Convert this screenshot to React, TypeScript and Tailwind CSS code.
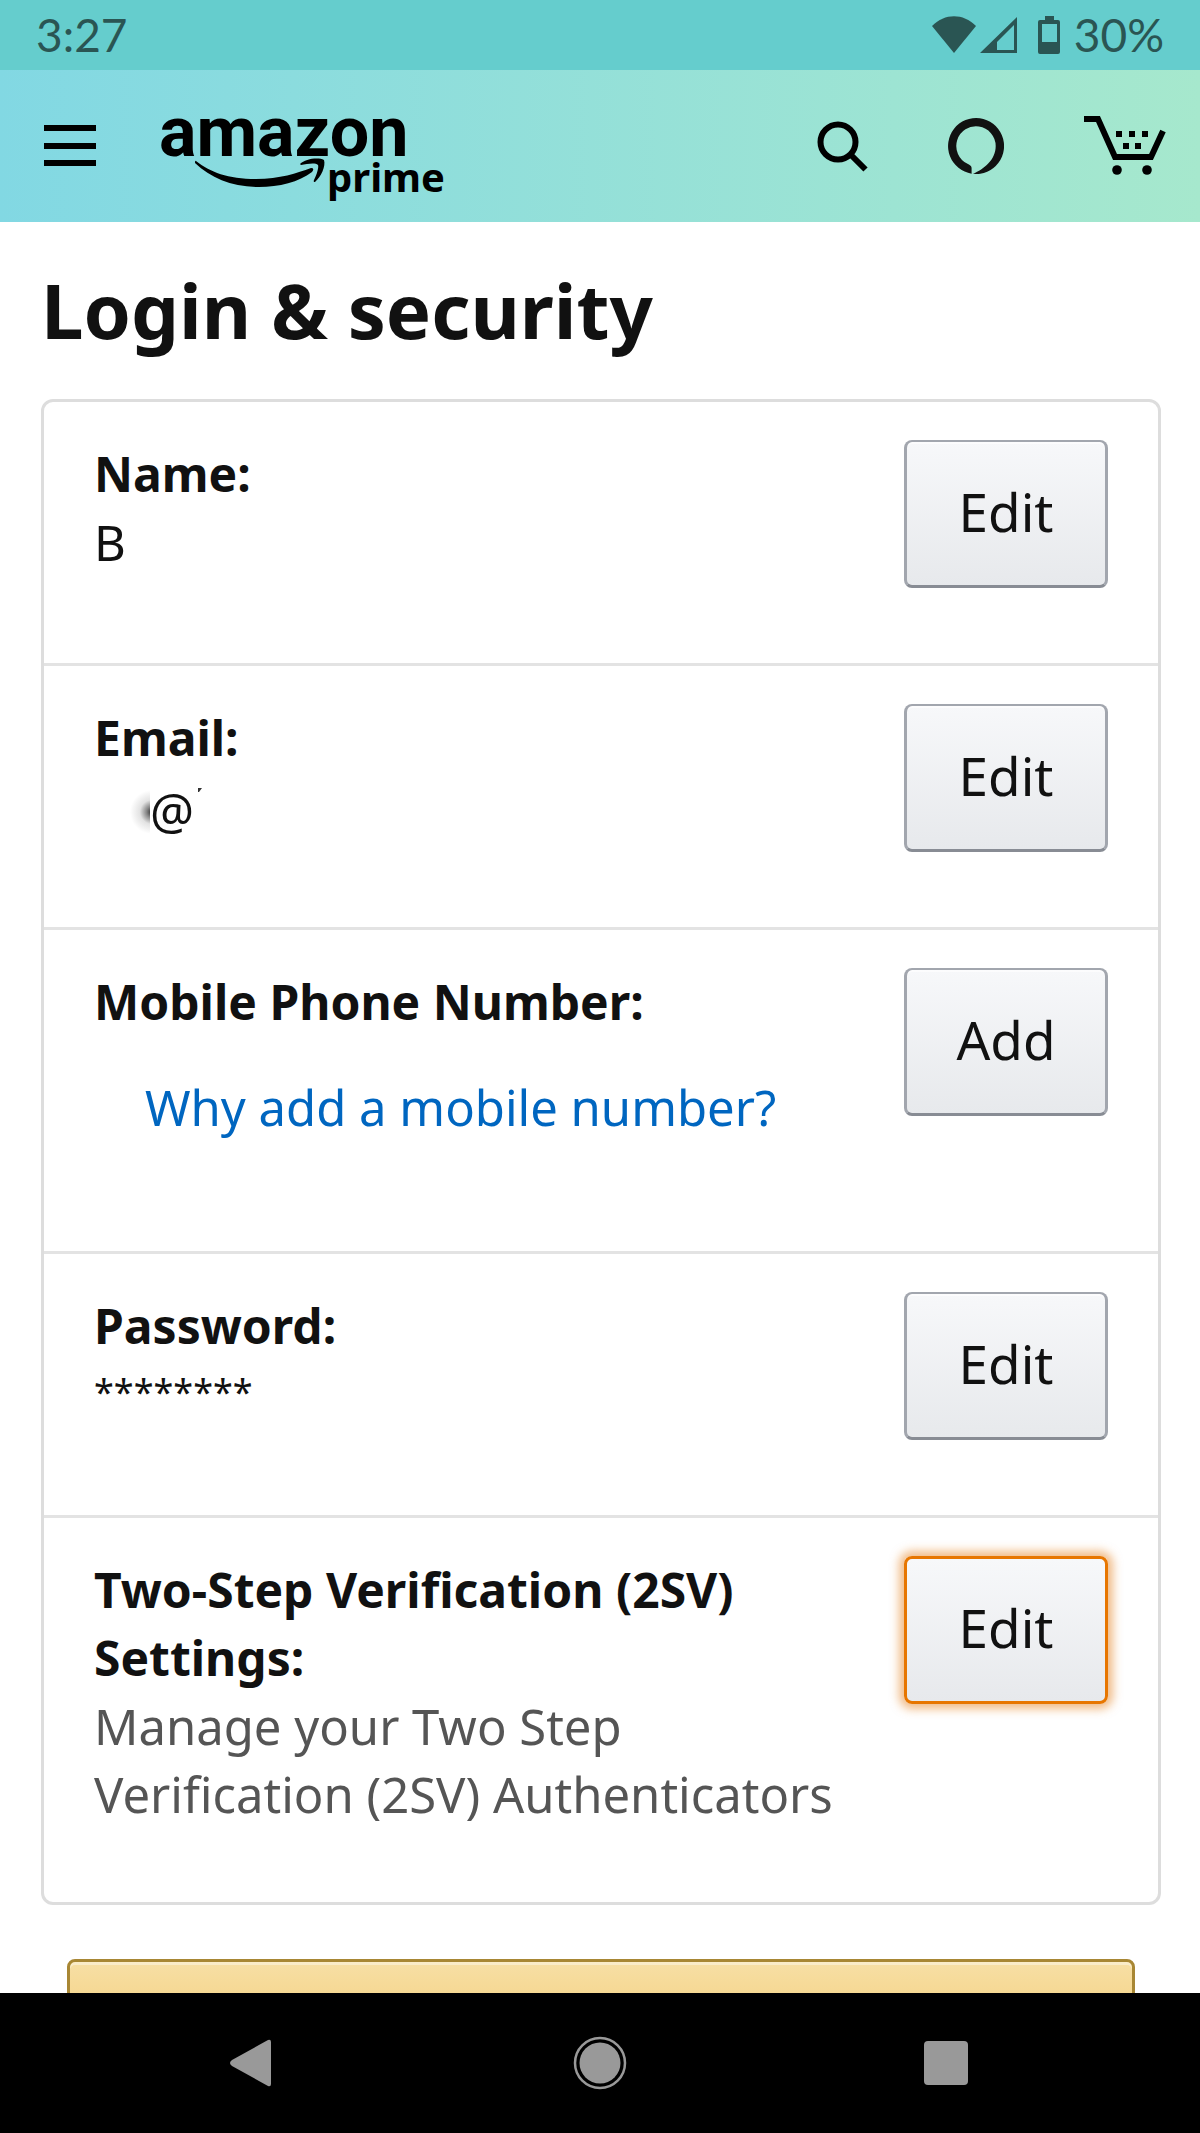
import React from 'react';

type Setting = {
  label: string;
  action: string;
  content?: React.ReactNode;
  focused?: boolean;
};

const settings: Setting[] = [
  { label: 'Name:', action: 'Edit', content: <p>B</p> },
  {
    label: 'Email:',
    action: 'Edit',
    content: (
      <p className="flex items-center pt-1 pl-3">
        <Smudge />
        @
        <svg className="mb-10 ml-1 h-1 w-1" viewBox="0 0 4 4" aria-hidden="true">
          <path d="M0 0h4l-3 4H0z" fill="#333" />
        </svg>
      </p>
    ),
  },
  {
    label: 'Mobile Phone Number:',
    action: 'Add',
    content: (
      <a href="#why" className="mt-[37px] mb-14 block pl-[51px] text-[#0066c0]">
        Why add a mobile number?
      </a>
    ),
  },
  { label: 'Password:', action: 'Edit', content: <p className="text-4xl leading-[64px]">********</p> },
  {
    label: 'Two-Step Verification (2SV) Settings:',
    action: 'Edit',
    focused: true,
    content: <p className="mb-5 text-[#555555]">Manage your Two Step Verification (2SV) Authenticators</p>,
  },
];

function Smudge() {
  return (
    <svg className="-mr-1 h-12 w-12" viewBox="0 0 48 48" aria-hidden="true">
      <defs>
        <radialGradient id="smudge" gradientUnits="userSpaceOnUse" cx="46" cy="26" r="22">
          <stop offset="0" stopColor="#111" stopOpacity="0.9" />
          <stop offset="0.25" stopColor="#111" stopOpacity="0.5" />
          <stop offset="0.55" stopColor="#111" stopOpacity="0.12" />
          <stop offset="1" stopColor="#111" stopOpacity="0" />
        </radialGradient>
      </defs>
      <path d="M24 4h20v44H24z" fill="url(#smudge)" />
    </svg>
  );
}

function StatusBar() {
  return (
    <div className="flex h-[70px] shrink-0 items-center justify-between bg-[#65cdcd] px-9 font-['Lato',sans-serif] text-[46px] leading-none text-[#2a5553]">
      <span>3:27</span>
      <div className="flex items-center">
        <svg className="h-[38px] w-[130px]" viewBox="0 0 130 38" fill="currentColor" aria-hidden="true">
          <path d="M0 10C13-3 31-3 44 10L22 37z" />
          <path fillRule="evenodd" d="M85 1v36H48zM82 9L65 26v8h17z" />
          <path fillRule="evenodd" d="M113 0h9v4h4q2 0 2 2v30q0 2-2 2h-18q-2 0-2-2V6q0-2 2-2h5zM110 8v18h15V8z" />
        </svg>
        <span className="ml-3">30%</span>
      </div>
    </div>
  );
}

function Logo() {
  return (
    <svg className="h-[120px] w-[300px]" viewBox="156 88 300 120" role="img" aria-label="amazon prime">
      <text x="159" y="156" fontFamily="Roboto, sans-serif" fontWeight="700" fontSize="70">
        amazon
      </text>
      <text x="327" y="192" fontFamily="'Noto Sans', sans-serif" fontWeight="700" fontSize="40">
        prime
      </text>
      <path d="M196 161C210 172 228 179 256 179C280 179 297 173 311 168Q315 168 312 172C299 182 279 187 259 187C232 187 211 178 195 163Q195 160 196 161z" />
      <path d="M300 164C305 159 318 157 324 160C326 166 321 177 315 182Q313 182 314 180C317 174 319 167 318 165C315 162 307 164 301 165z" />
    </svg>
  );
}

function Header() {
  return (
    <header className="flex h-[152px] shrink-0 items-center bg-linear-to-r from-[#82d8e3] to-[#a6e8cd] pr-[34px] pl-11">
      <button aria-label="Menu">
        <svg className="h-[42px] w-[52px]" viewBox="0 0 52 42" aria-hidden="true">
          <path d="M0 0h52v6H0zM0 18h52v6H0zM0 35h52v6H0z" />
        </svg>
      </button>
      <a href="#home" className="mt-1 ml-[60px]">
        <Logo />
      </a>
      <div className="ml-auto flex items-center gap-20">
        <button aria-label="Search">
          <svg className="h-[51px] w-[51px]" viewBox="0 0 51 51" fill="none" stroke="#000" strokeWidth="6" aria-hidden="true">
            <circle cx="21" cy="21" r="17.5" />
            <path d="M33 33l15.500 15.500" />
          </svg>
        </button>
        <button aria-label="Alexa">
          <svg className="h-14 w-14" viewBox="0 0 56 56" fill="#111" aria-hidden="true">
            <path d="M23.600 55.650A28 28 0 1 1 25 55.840C36 51 47.700 42 47.700 28A19.700 19.700 0 1 0 19.500 45.800Q23.600 47.500 23.600 50z" />
          </svg>
        </button>
        <button aria-label="Cart">
          <svg className="h-[60px] w-[82px]" viewBox="0 0 82 60" aria-hidden="true">
            <path d="M0 3h14l17 38h36l12-26" fill="none" stroke="#000" strokeWidth="6" />
            <path d="M32 15h6v6h-6zM45 15h6v6h-6zM58 15h6v6h-6zM39 27h6v6h-6zM51 27h6v6h-6z" />
            <circle cx="33" cy="54" r="4.800" />
            <circle cx="63" cy="54" r="4.800" />
          </svg>
        </button>
      </div>
    </header>
  );
}

function SettingRow({ label, action, content, focused }: Setting) {
  return (
    <li className="flex items-start justify-between border-b-3 border-[#e3e3e3] px-[50px] pt-[38px] pb-[54px] last:border-b-0">
      <div className="min-h-[169px] max-w-[760px]">
        <h2 className="text-5xl leading-[68px] font-bold">{label}</h2>
        {content}
      </div>
      <button
        className={
          focused
            ? 'h-[148px] w-[204px] shrink-0 rounded-lg border-3 border-[#e77600] bg-linear-to-b from-[#f7f8fa] to-[#e7e9ec] pb-1 text-[53px] shadow-[0_0_10px_5px_rgba(228,121,17,0.5)]'
            : 'h-[148px] w-[204px] shrink-0 rounded-lg border-3 border-t-2 border-[#a2a6ae] border-b-[#888c94] bg-linear-to-b from-[#f7f8fa] to-[#e7e9ec] pb-1 text-[53px] shadow-[inset_0_2px_0_rgba(255,255,255,0.6)]'
        }
      >
        {action}
      </button>
    </li>
  );
}

function NavBar() {
  return (
    <nav className="flex h-[140px] shrink-0 items-center justify-between bg-black px-56 text-[#999999]">
      <button aria-label="Back">
        <svg className="h-[54px] w-[54px]" viewBox="0 0 54 54" fill="currentColor" aria-hidden="true">
          <path d="M8 24L44 4q3-1 3 2v42q0 3-3 2L8 30q-4-3 0-6z" />
        </svg>
      </button>
      <button aria-label="Home">
        <svg className="h-[54px] w-[54px]" viewBox="0 0 54 54" aria-hidden="true">
          <circle cx="27" cy="27" r="25" fill="none" stroke="currentColor" strokeWidth="2.500" />
          <circle cx="27" cy="27" r="20.500" fill="currentColor" />
        </svg>
      </button>
      <button aria-label="Recent apps">
        <svg className="h-[54px] w-[54px]" viewBox="0 0 54 54" fill="currentColor" aria-hidden="true">
          <rect x="2" y="5" width="44" height="44" rx="4" />
        </svg>
      </button>
    </nav>
  );
}

const App: React.FC = () => {
  return (
    <div className="flex h-screen flex-col bg-white font-['Noto_Sans',sans-serif] text-[#111111]">
      <StatusBar />
      <Header />
      <main className="min-h-0 flex-1 overflow-hidden pt-9 pr-[39px] pl-[41px]">
        <h1 className="text-[76px] leading-[104px] font-bold">Login &amp; security</h1>
        <ul className="mt-[37px] rounded-xl border-3 border-[#dddddd] text-[49px] leading-[68px]">
          {settings.map((setting) => (
            <SettingRow key={setting.label} {...setting} />
          ))}
        </ul>
        <div className="mt-[54px] px-[26px]">
          <button
            aria-label="Done"
            className="block h-[148px] w-full rounded-lg border-3 border-[#a88734] bg-linear-to-b from-[#f7dfa5] to-[#f0c14b] shadow-[inset_0_3px_0_rgba(255,255,255,0.4)]"
          />
        </div>
      </main>
      <NavBar />
    </div>
  );
};

export default App;
